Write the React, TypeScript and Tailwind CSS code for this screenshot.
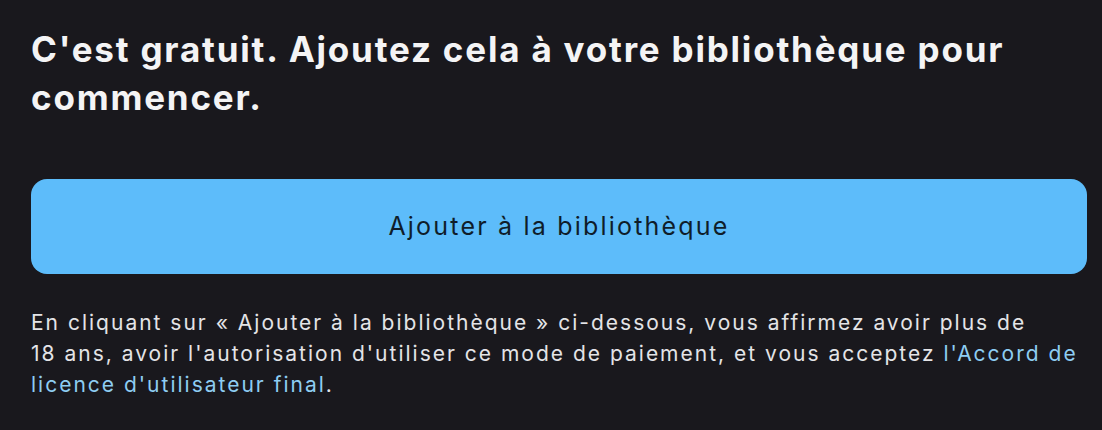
import React from 'react';

export default function App() {
    return (
        <div
            className="w-[1102px] h-[430px] bg-[#19181d] pl-[31px] pr-[15px] pt-[25px] overflow-hidden"
            style={{ fontFamily: 'Inter, "Noto Sans", sans-serif' }}
        >
            <h1 className="text-[35px] leading-[48px] font-bold tracking-[1.8px] text-[#f4f4f5] pr-[40px]">
                C'est gratuit. Ajoutez cela à votre bibliothèque pour commencer.
            </h1>

            <button className="mt-[58px] w-full h-[95px] rounded-2xl bg-[#5dbcfa] text-[#0f1d2a] text-[25px] tracking-[2.2px] flex items-center justify-center">
                Ajouter à la bibliothèque
            </button>

            <p className="mt-[33px] text-[21px] leading-[31px] tracking-[2px] text-[#e4e4e7]">
                En cliquant sur « Ajouter à la bibliothèque » ci-dessous, vous affirmez avoir plus de 18&nbsp;ans, avoir
                l'autorisation d'utiliser ce mode de paiement, et vous acceptez{' '}
                <a className="text-[#8ecdf2]">l'Accord de licence d'utilisateur final</a>.
            </p>
        </div>
    );
}
